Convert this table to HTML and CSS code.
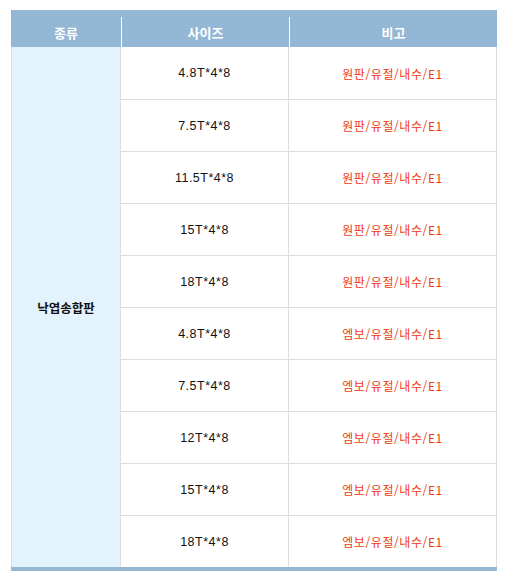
FILE: index.html
```html
<!DOCTYPE html>
<html lang="ko">
<head>
<meta charset="utf-8">
<link rel="stylesheet" href="styles.css">
</head>
<body>
<table class="spec">
  <thead>
    <tr>
      <th class="c1">종류</th>
      <th class="c2">사이즈</th>
      <th class="c3">비고</th>
    </tr>
  </thead>
  <tbody>
    <tr class="first"><td class="kind" rowspan="10">낙엽송합판</td><td class="size">4.8T*4*8</td><td class="note">원판/유절/내수/E1</td></tr>
    <tr><td class="size">7.5T*4*8</td><td class="note">원판/유절/내수/E1</td></tr>
    <tr><td class="size">11.5T*4*8</td><td class="note">원판/유절/내수/E1</td></tr>
    <tr><td class="size">15T*4*8</td><td class="note">원판/유절/내수/E1</td></tr>
    <tr><td class="size">18T*4*8</td><td class="note">원판/유절/내수/E1</td></tr>
    <tr><td class="size">4.8T*4*8</td><td class="note">엠보/유절/내수/E1</td></tr>
    <tr><td class="size">7.5T*4*8</td><td class="note">엠보/유절/내수/E1</td></tr>
    <tr><td class="size">12T*4*8</td><td class="note">엠보/유절/내수/E1</td></tr>
    <tr><td class="size">15T*4*8</td><td class="note">엠보/유절/내수/E1</td></tr>
    <tr><td class="size">18T*4*8</td><td class="note">엠보/유절/내수/E1</td></tr>
  </tbody>
</table>
</body>
</html>
```

FILE: styles.css
```css
html, body {
  margin: 0;
  padding: 0;
  background: #fff;
}
body {
  padding: 10px 0 0 11px;
  font-family: "Liberation Sans", "Noto Sans CJK KR", sans-serif;
  font-size: 12px;
}
.spec {
  width: 486px;
  border-collapse: separate;
  border-spacing: 0;
  table-layout: fixed;
  border-top: 7px solid #93b7d4;
  border-bottom: 4px solid #93b7d4;
}
.spec th {
  background: #93b7d4;
  color: #fff;
  font-weight: bold;
  height: 30px;
  padding: 0;
  text-align: center;
  font-family: "Noto Sans CJK KR", sans-serif;
  font-size: 13px;
  border-left: 1px solid #fff;
}
.spec th.c1 { width: 110px; border-left: none; }
.spec th.c2 { width: 167px; }
.spec td {
  padding: 0;
  height: 51px;
  text-align: center;
  border-bottom: 1px solid #dedede;
  border-right: 1px solid #dedede;
}
.spec tr.first td.size,
.spec tr.first td.note { height: 52px; }
.spec tbody tr:last-child td { border-bottom: none; }
.spec td.kind {
  background: #e3f3fd;
  border-left: 1px solid #dedede;
  border-bottom: none;
  color: #111;
  font-family: "Noto Sans CJK KR", sans-serif;
  font-weight: bold;
  font-size: 12.5px;
}
.spec td.size {
  color: #111;
  font-size: 12.5px;
  letter-spacing: 0.5px;
}
.spec td.note {
  color: #f03c14;
  font-family: "Noto Sans CJK KR", sans-serif;
  font-size: 12px;
  letter-spacing: 0.6px;
}
```
